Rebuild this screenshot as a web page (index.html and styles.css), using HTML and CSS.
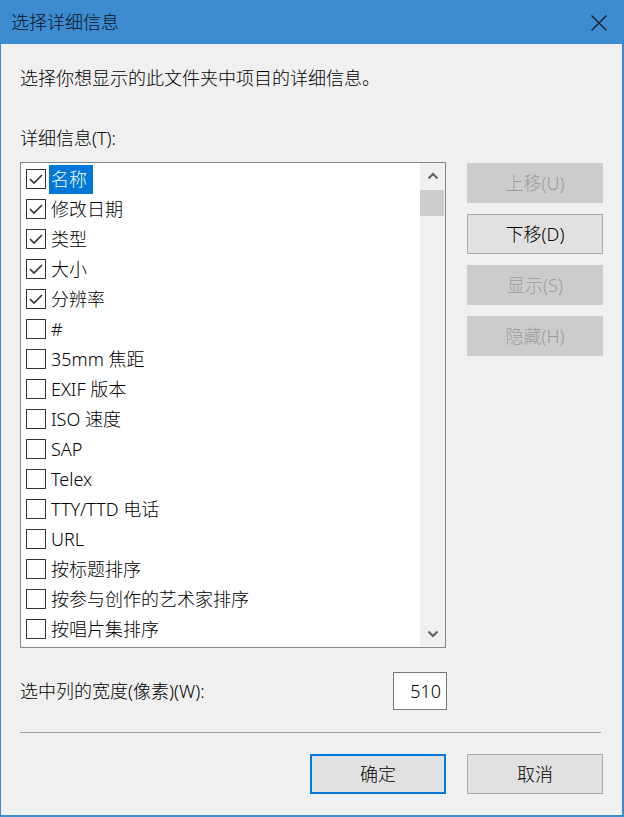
FILE: index.html
```html
<!DOCTYPE html>
<html lang="zh-CN">
<head>
<meta charset="utf-8">
<title>选择详细信息</title>
<link rel="stylesheet" href="styles.css">
</head>
<body>
<div class="window">
  <div class="titlebar">
    <span class="title">选择详细信息</span>
    <svg class="close" width="16" height="16" viewBox="0 0 16 16"><path d="M0.5 0.5 L15.5 15.5 M15.5 0.5 L0.5 15.5" stroke="#1b1b1b" stroke-width="1.2" fill="none"/></svg>
  </div>
  <div class="content">
    <p class="intro">选择你想显示的此文件夹中项目的详细信息。</p>
    <p class="label">详细信息(T):</p>
    <div class="main">
      <div class="listbox">
        <ul class="items">
          <li class="row"><span class="cb checked"><svg width="18" height="18" viewBox="0 0 18 18"><path d="M3 9 L7 13 L15 5" stroke="#333" stroke-width="1.6" fill="none"/></svg></span><span class="text selected">名称</span></li>
          <li class="row"><span class="cb checked"><svg width="18" height="18" viewBox="0 0 18 18"><path d="M3 9 L7 13 L15 5" stroke="#333" stroke-width="1.6" fill="none"/></svg></span><span class="text">修改日期</span></li>
          <li class="row"><span class="cb checked"><svg width="18" height="18" viewBox="0 0 18 18"><path d="M3 9 L7 13 L15 5" stroke="#333" stroke-width="1.6" fill="none"/></svg></span><span class="text">类型</span></li>
          <li class="row"><span class="cb checked"><svg width="18" height="18" viewBox="0 0 18 18"><path d="M3 9 L7 13 L15 5" stroke="#333" stroke-width="1.6" fill="none"/></svg></span><span class="text">大小</span></li>
          <li class="row"><span class="cb checked"><svg width="18" height="18" viewBox="0 0 18 18"><path d="M3 9 L7 13 L15 5" stroke="#333" stroke-width="1.6" fill="none"/></svg></span><span class="text">分辨率</span></li>
          <li class="row"><span class="cb"></span><span class="text">#</span></li>
          <li class="row"><span class="cb"></span><span class="text">35mm 焦距</span></li>
          <li class="row"><span class="cb"></span><span class="text">EXIF 版本</span></li>
          <li class="row"><span class="cb"></span><span class="text">ISO 速度</span></li>
          <li class="row"><span class="cb"></span><span class="text">SAP</span></li>
          <li class="row"><span class="cb"></span><span class="text">Telex</span></li>
          <li class="row"><span class="cb"></span><span class="text">TTY/TTD 电话</span></li>
          <li class="row"><span class="cb"></span><span class="text">URL</span></li>
          <li class="row"><span class="cb"></span><span class="text">按标题排序</span></li>
          <li class="row"><span class="cb"></span><span class="text">按参与创作的艺术家排序</span></li>
          <li class="row"><span class="cb"></span><span class="text">按唱片集排序</span></li>
        </ul>
        <div class="scrollbar">
          <div class="arrow"><svg width="12" height="8" viewBox="0 0 12 8"><path d="M1.5 6.5 L6 2 L10.5 6.5" stroke="#606060" stroke-width="2" fill="none"/></svg></div>
          <div class="thumb"></div>
          <div class="track"></div>
          <div class="arrow"><svg width="12" height="8" viewBox="0 0 12 8"><path d="M1.5 1.5 L6 6 L10.5 1.5" stroke="#606060" stroke-width="2" fill="none"/></svg></div>
        </div>
      </div>
      <div class="side-buttons">
        <div class="btn disabled">上移(U)</div>
        <div class="btn">下移(D)</div>
        <div class="btn disabled">显示(S)</div>
        <div class="btn disabled">隐藏(H)</div>
      </div>
    </div>
    <div class="width-row">
      <span class="width-label">选中列的宽度(像素)(W):</span>
      <div class="input">510</div>
    </div>
    <div class="sep"></div>
    <div class="footer">
      <div class="btn default">确定</div>
      <div class="btn">取消</div>
    </div>
  </div>
</div>
</body>
</html>
```

FILE: styles.css
```css
* { box-sizing: border-box; }

html, body {
  margin: 0;
  padding: 0;
  background: #f0f0f0;
}

body {
  font-family: "Noto Sans", "Noto Sans CJK SC", sans-serif;
  font-size: 18px;
  font-weight: 300;
  color: #000;
}

.window {
  width: 624px;
  height: 817px;
  background: #f0f0f0;
  border-left: 1px solid #3c8ad0;
  border-right: 2px solid #3c8ad0;
  border-bottom: 2px solid #3c8ad0;
  display: flex;
  flex-direction: column;
}

.titlebar {
  height: 44px;
  background: #3d8bd0;
  display: flex;
  align-items: center;
  justify-content: space-between;
  padding: 0 15px 0 10px;
  flex-shrink: 0;
}

.title {
  font-size: 18px;
  line-height: 24px;
  color: #0b1420;
}

.close {
  display: block;
  margin-top: 1px;
}

.content {
  padding: 0 19px 0 19px;
}

.intro, .label {
  margin: 0;
  line-height: 24px;
}

.intro { margin-top: 22px; }
.label { margin-top: 36px; }

.main {
  margin-top: 12px;
  display: flex;
  gap: 21px;
  align-items: flex-start;
}

.listbox {
  width: 426px;
  height: 486px;
  border: 1px solid #828790;
  background: #fff;
  display: flex;
  overflow: hidden;
}

.items {
  list-style: none;
  margin: 0;
  padding: 1px 0 0 5px;
  flex: 1;
  overflow: hidden;
}

.row {
  height: 30px;
  display: flex;
  align-items: center;
}

.cb {
  width: 20px;
  height: 20px;
  border: 1px solid #333;
  background: #fff;
  display: flex;
  align-items: center;
  justify-content: center;
  flex-shrink: 0;
  margin-right: 3px;
}

.cb svg { display: block; }

.text {
  line-height: 29px;
  padding: 0 6px 0 2px;
  white-space: nowrap;
}

.text.selected {
  background: #0078d7;
  color: #fff;
}

.scrollbar {
  width: 25px;
  background: #f0f0f0;
  display: flex;
  flex-direction: column;
  flex-shrink: 0;
}

.arrow {
  height: 26px;
  display: flex;
  align-items: center;
  justify-content: center;
  flex-shrink: 0;
}

.thumb {
  height: 26px;
  margin: 1px 1px 0 0;
  background: #cdcdcd;
  flex-shrink: 0;
}

.track { flex: 1; }

.side-buttons {
  margin-top: 1px;
  display: flex;
  flex-direction: column;
  gap: 11px;
}

.btn {
  width: 136px;
  height: 40px;
  background: #e1e1e1;
  border: 1px solid #adadad;
  display: flex;
  align-items: center;
  justify-content: center;
  line-height: 24px;
}

.btn.disabled {
  background: #cccccc;
  border-color: #cccccc;
  color: #9c9c9c;
}

.btn.default {
  border: 2px solid #0078d7;
}

.width-row {
  margin-top: 24px;
  display: flex;
  align-items: center;
  justify-content: space-between;
  width: 427px;
}

.width-label {
  line-height: 24px;
}

.input {
  width: 54px;
  height: 38px;
  border: 1px solid #7a7a7a;
  background: #fff;
  text-align: right;
  padding-right: 5px;
  line-height: 36px;
}

.sep {
  margin-top: 22px;
  height: 1px;
  width: 581px;
  background: #a0a0a0;
}

.footer {
  margin-top: 21px;
  display: flex;
  justify-content: flex-end;
  gap: 21px;
}
```
